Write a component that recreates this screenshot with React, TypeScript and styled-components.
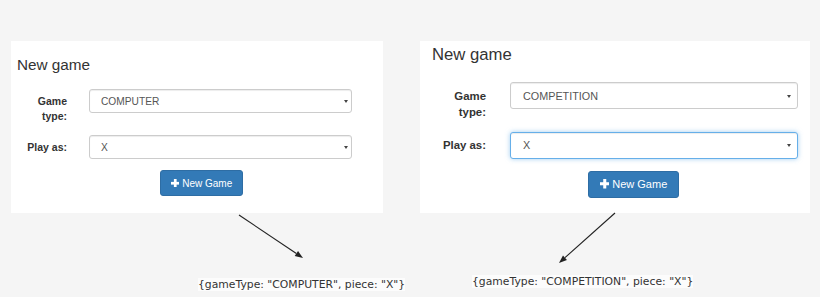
import React from "react";
import styled, { createGlobalStyle, css } from "styled-components";

const GlobalStyle = createGlobalStyle`
  html, body {
    margin: 0;
    padding: 0;
    background: #f5f5f5;
  }
  body {
    font-family: "Liberation Sans", Arial, sans-serif;
  }
`;

type Size = {
  width: number;
  padTop: number;
  padLeft: number;
  titleSize: number;
  titleLine: number;
  titleGap: number;
  labelWidth: number;
  labelSize: number;
  labelLine: number;
  labelPad: number;
  colGap: number;
  rowGap: number;
  selectWidth: number;
  selectHeight: number;
  fieldSize: number;
  fieldPad: number;
  caretRight: number;
  buttonLeft: number;
  buttonWidth: number;
  buttonHeight: number;
  buttonSize: number;
};

const small: Size = {
  width: 372,
  padTop: 15,
  padLeft: 6,
  titleSize: 15.3,
  titleLine: 18,
  titleGap: 15,
  labelWidth: 50,
  labelSize: 10.5,
  labelLine: 15,
  labelPad: 5,
  colGap: 22,
  rowGap: 11,
  selectWidth: 263,
  selectHeight: 24,
  fieldSize: 10.2,
  fieldPad: 12,
  caretRight: 4,
  buttonLeft: 149,
  buttonWidth: 83,
  buttonHeight: 26,
  buttonSize: 10,
};

const large: Size = {
  width: 390,
  padTop: 4,
  padLeft: 12,
  titleSize: 16.7,
  titleLine: 20,
  titleGap: 17,
  labelWidth: 54,
  labelSize: 11.4,
  labelLine: 16,
  labelPad: 5.7,
  colGap: 24,
  rowGap: 12,
  selectWidth: 288,
  selectHeight: 27,
  fieldSize: 10.8,
  fieldPad: 13,
  caretRight: 7,
  buttonLeft: 168,
  buttonWidth: 91,
  buttonHeight: 27,
  buttonSize: 11,
};

const Page = styled.div`
  width: 820px;
  height: 297px;
  box-sizing: border-box;
  padding: 41px 0 0 11px;
  display: flex;
  gap: 37px;
  overflow: hidden;
`;

const Column = styled.div<{ $w: number }>`
  width: ${(p) => p.$w}px;
  display: flex;
  flex-direction: column;
`;

const Panel = styled.section<{ $s: Size }>`
  background: #fff;
  height: 172px;
  box-sizing: border-box;
  padding: ${(p) => p.$s.padTop}px 0 0 ${(p) => p.$s.padLeft}px;
`;

const Title = styled.h3<{ $s: Size }>`
  margin: 0 0 ${(p) => p.$s.titleGap}px;
  font-weight: normal;
  color: #333;
  font-size: ${(p) => p.$s.titleSize}px;
  line-height: ${(p) => p.$s.titleLine}px;
`;

const Form = styled.form<{ $s: Size }>`
  display: grid;
  grid-template-columns: ${(p) => p.$s.labelWidth}px ${(p) => p.$s.selectWidth}px;
  column-gap: ${(p) => p.$s.colGap}px;
  row-gap: ${(p) => p.$s.rowGap}px;
  align-items: start;
  margin: 0;
`;

const Label = styled.label<{ $s: Size }>`
  text-align: right;
  font-weight: bold;
  color: #333;
  font-size: ${(p) => p.$s.labelSize}px;
  line-height: ${(p) => p.$s.labelLine}px;
  padding-top: ${(p) => p.$s.labelPad}px;
`;

const SelectWrap = styled.div<{ $s: Size }>`
  position: relative;
  height: ${(p) => p.$s.selectHeight}px;
`;

const Select = styled.select<{ $s: Size; $focus?: boolean }>`
  appearance: none;
  width: 100%;
  height: 100%;
  box-sizing: border-box;
  margin: 0;
  border: 1px solid #ccc;
  border-radius: 3px;
  background: #fff;
  color: #555;
  font-family: inherit;
  font-size: ${(p) => p.$s.fieldSize}px;
  padding: 0 0 0 ${(p) => p.$s.fieldPad - 1}px;
  box-shadow: inset 0 1px 1px rgba(0, 0, 0, 0.075);
  outline: none;
  ${(p) =>
    p.$focus &&
    css`
      border-color: #66afe9;
      box-shadow: inset 0 1px 1px rgba(0, 0, 0, 0.075),
        0 0 5px rgba(102, 175, 233, 0.6);
    `}
`;

const Caret = styled.span<{ $s: Size }>`
  position: absolute;
  right: ${(p) => p.$s.caretRight}px;
  top: 50%;
  margin-top: -1px;
  border-left: 2.5px solid transparent;
  border-right: 2.5px solid transparent;
  border-top: 3.5px solid #444;
  pointer-events: none;
`;

const ButtonRow = styled.div<{ $s: Size }>`
  grid-column: 1 / -1;
  padding-left: ${(p) => p.$s.buttonLeft - p.$s.padLeft}px;
`;

const Button = styled.button<{ $s: Size }>`
  width: ${(p) => p.$s.buttonWidth}px;
  height: ${(p) => p.$s.buttonHeight}px;
  display: inline-flex;
  align-items: center;
  justify-content: center;
  gap: 3px;
  padding: 0;
  background: #337ab7;
  border: 1px solid #2e6da4;
  border-radius: 3px;
  color: #fff;
  font-family: inherit;
  font-size: ${(p) => p.$s.buttonSize}px;
`;

const Caption = styled.code<{ $left: number; $top: number }>`
  align-self: flex-start;
  margin: ${(p) => p.$top}px 0 0 ${(p) => p.$left}px;
  font-family: "DejaVu Sans", Verdana, sans-serif;
  font-size: 10.8px;
  line-height: 13px;
  color: #333;
  white-space: nowrap;
  background: #fcfcfc;
`;

function Plus({ size }: { size: number }) {
  const t = size * 0.32;
  const o = (size - t) / 2;
  return (
    <svg width={size} height={size} viewBox={`0 0 ${size} ${size}`}>
      <rect x={o} y={0} width={t} height={size} fill="#fff" />
      <rect x={0} y={o} width={size} height={t} fill="#fff" />
    </svg>
  );
}

function Arrow(props: { x1: number; y1: number; x2: number; y2: number }) {
  const { x1, y1, x2, y2 } = props;
  const dx = x2 - x1;
  const dy = y2 - y1;
  const len = Math.hypot(dx, dy);
  const ux = dx / len;
  const uy = dy / len;
  const bx = x2 - ux * 8;
  const by = y2 - uy * 8;
  const px = -uy * 3;
  const py = ux * 3;
  return (
    <svg width="100%" height={52} style={{ overflow: "visible", display: "block" }}>
      <line x1={x1} y1={y1} x2={bx} y2={by} stroke="#222" strokeWidth={1.1} />
      <polygon
        points={`${x2},${y2} ${bx + px},${by + py} ${bx - px},${by - py}`}
        fill="#222"
      />
    </svg>
  );
}

function GameForm(props: { s: Size; type: string; focusPiece?: boolean }) {
  const { s } = props;
  return (
    <Panel $s={s}>
      <Title $s={s}>New game</Title>
      <Form $s={s}>
        <Label $s={s}>Game type:</Label>
        <SelectWrap $s={s}>
          <Select $s={s} defaultValue={props.type}>
            <option>COMPUTER</option>
            <option>COMPETITION</option>
          </Select>
          <Caret $s={s} />
        </SelectWrap>
        <Label $s={s}>Play as:</Label>
        <SelectWrap $s={s}>
          <Select $s={s} $focus={props.focusPiece} defaultValue="X">
            <option>X</option>
            <option>O</option>
          </Select>
          <Caret $s={s} />
        </SelectWrap>
        <ButtonRow $s={s}>
          <Button $s={s} type="button">
            <Plus size={s.buttonSize - 1.5} />
            New Game
          </Button>
        </ButtonRow>
      </Form>
    </Panel>
  );
}

export default function App() {
  return (
    <>
      <GlobalStyle />
      <Page>
        <Column $w={small.width}>
          <GameForm s={small} type="COMPUTER" />
          <Arrow x1={228} y1={2} x2={292} y2={45} />
          <Caption $left={187} $top={12.5}>
            {'{gameType: "COMPUTER", piece: "X"}'}
          </Caption>
        </Column>
        <Column $w={large.width}>
          <GameForm s={large} type="COMPETITION" focusPiece />
          <Arrow x1={195} y1={0} x2={139} y2={50} />
          <Caption $left={52} $top={9.5}>
            {'{gameType: "COMPETITION", piece: "X"}'}
          </Caption>
        </Column>
      </Page>
    </>
  );
}
